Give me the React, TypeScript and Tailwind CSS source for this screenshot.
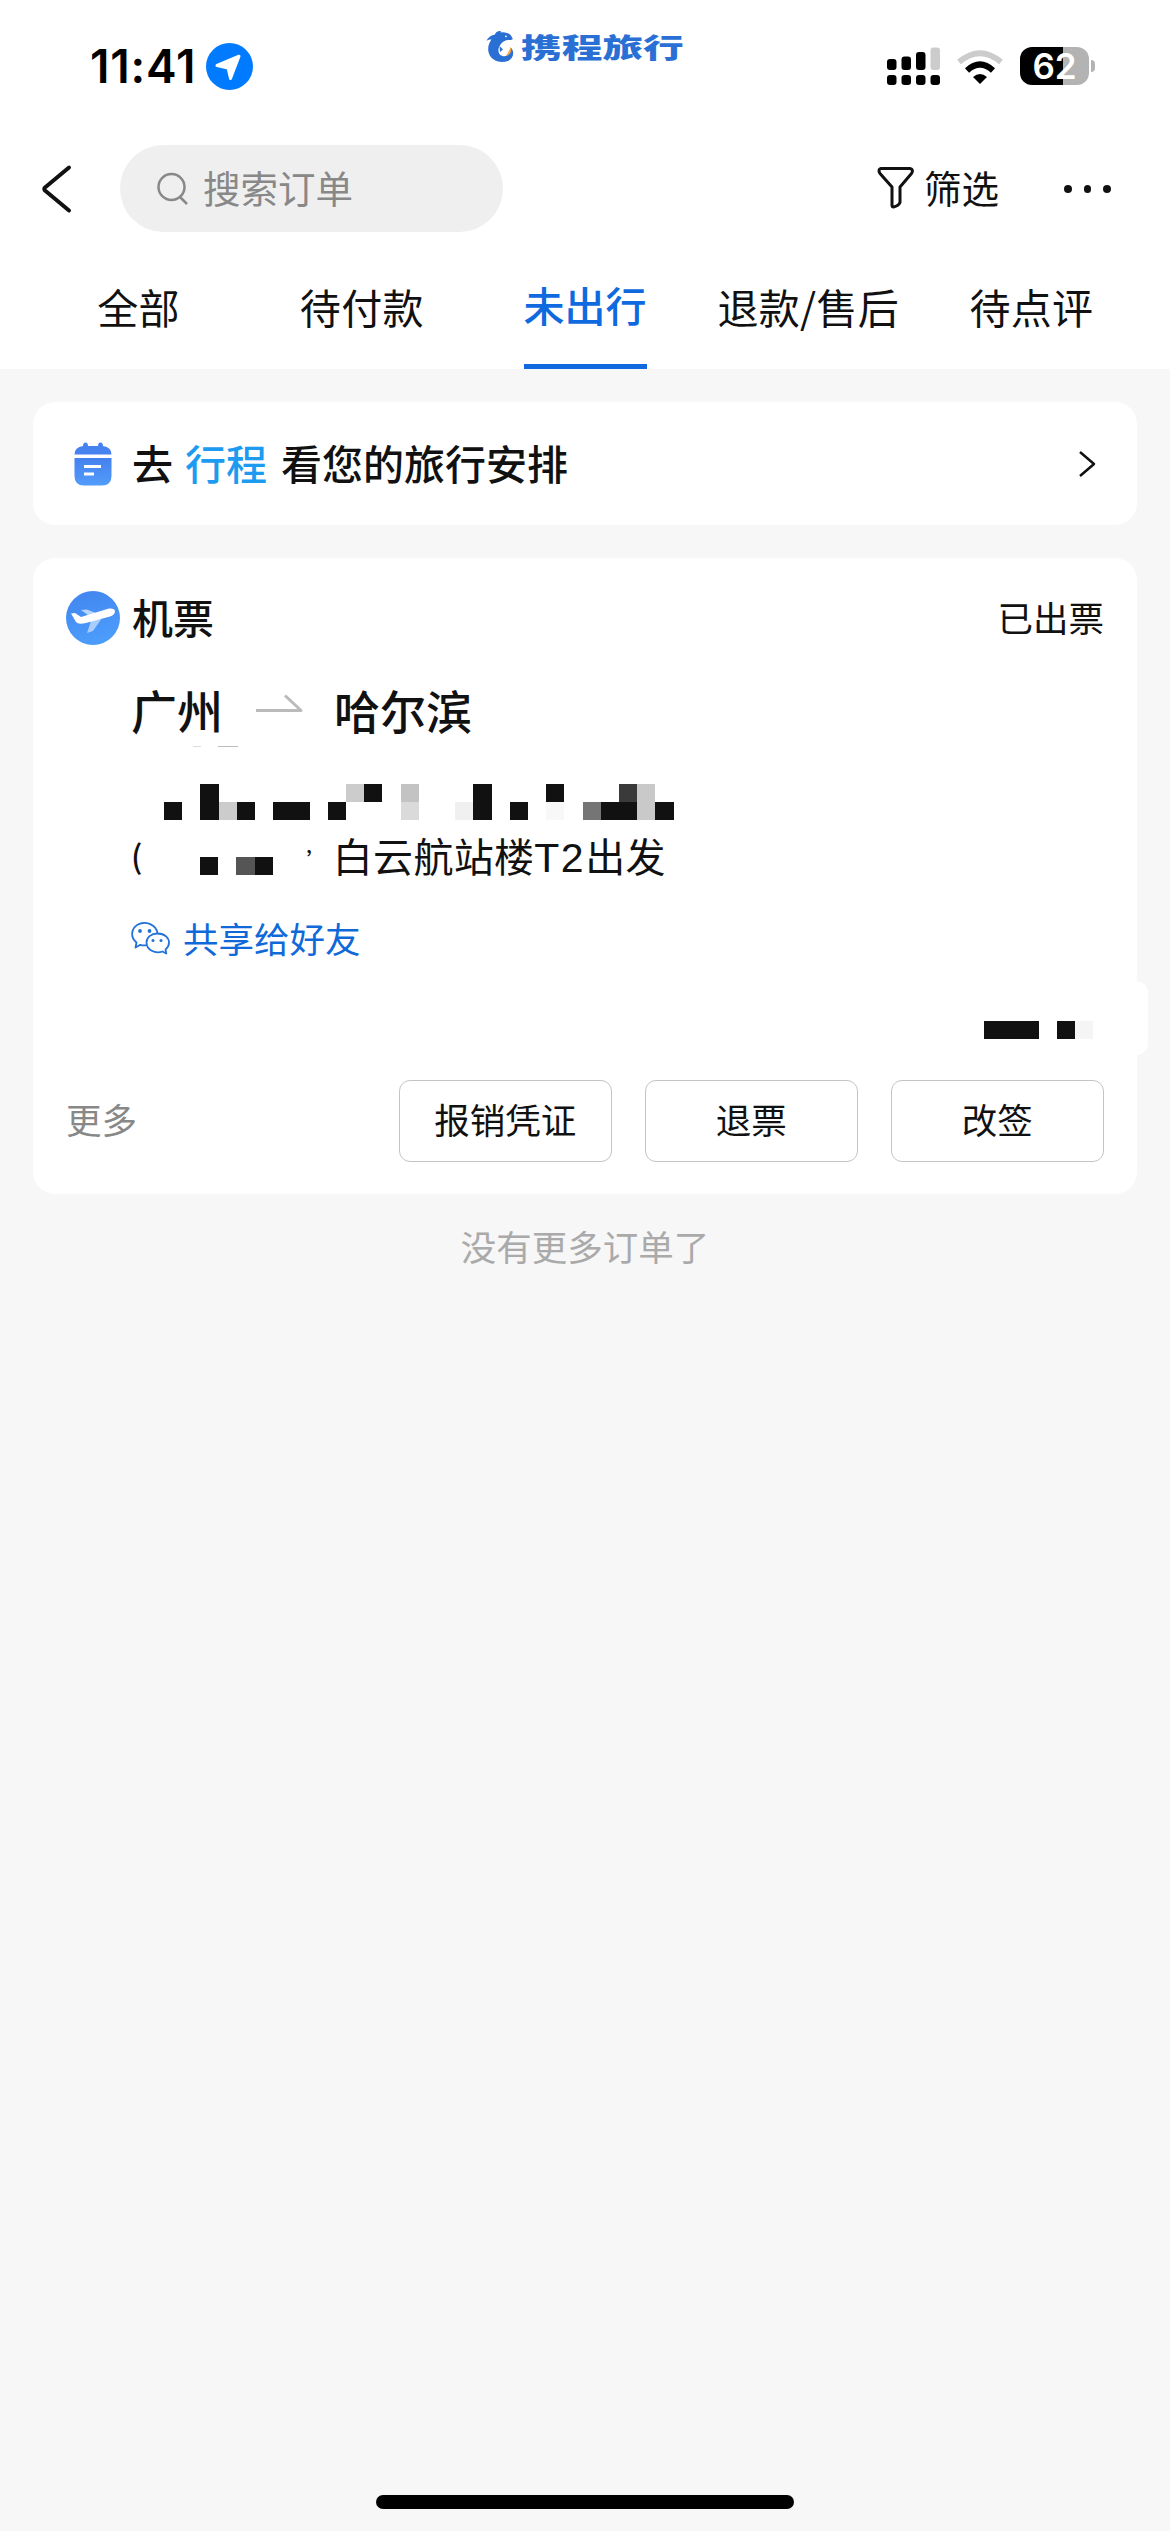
import type { ReactNode } from 'react';

type Tab = { label: string; active?: boolean };

const tabs: Tab[] = [
    { label: '全部' },
    { label: '待付款' },
    { label: '未出行', active: true },
    { label: '退款/售后' },
    { label: '待点评' },
];

const actions = ['报销凭证', '退票', '改签'];

// [column, row, fill] of every masked cell
type Cell = [number, number, string];

const CELL = 18.2;

const dateCells: Cell[] = [
    [2, 0, '#111'], [10, 0, '#ccc'], [11, 0, '#111'], [13, 0, '#c3c3c3'], [17, 0, '#111'],
    [21, 0, '#111'], [25, 0, '#3a3a3a'], [26, 0, '#c9c9c9'],
    [0, 1, '#111'], [2, 1, '#111'], [3, 1, '#ccc'], [4, 1, '#111'], [6, 1, '#111'], [7, 1, '#111'],
    [9, 1, '#111'], [13, 1, '#dadada'], [16, 1, '#f0f0f0'], [17, 1, '#111'], [19, 1, '#111'],
    [21, 1, '#f8f8f8'], [23, 1, '#757575'], [24, 1, '#111'], [25, 1, '#111'], [26, 1, '#c9c9c9'], [27, 1, '#111'],
];

const airportCells: Cell[] = [[0, 0, '#111'], [2, 0, '#555'], [3, 0, '#111']];

const priceCells: Cell[] = [
    [0, 0, '#111'], [1, 0, '#111'], [2, 0, '#111'], [4, 0, '#111'], [5, 0, '#f5f5f5'],
];

function Mosaic({ cells, cols, rows, className }: { cells: Cell[]; cols: number; rows: number; className?: string }) {
    return (
        <svg width={cols * CELL} height={rows * CELL} className={className} shapeRendering="crispEdges">
            {cells.map(([c, r, fill]) => (
                <rect key={`${c}-${r}`} x={c * CELL} y={r * CELL} width={CELL} height={CELL} fill={fill} />
            ))}
        </svg>
    );
}

function DolphinIcon() {
    return (
        <svg width="29" height="33" viewBox="0 0 29 33" className="shrink-0">
            <path
                d="M0.500 10.500C2.500 7 5 5 9 4.500C9.500 2 12 0.500 15 1L14.500 2.500C20 1.500 25 4 26 7.500C27.500 9 26.500 10.300 24 10C20 9.500 17 11 14.500 14.500C11 19 12 25 16.500 26C21 27 25.500 24 24.800 17.500C29 22 27.500 28.500 22 31C13 34 4.500 30 2.500 22C1.500 17 3 13 5.500 9.500C3.500 9.500 2 10 0.500 10.500Z"
                fill="#2a70d4"
            />
            <path d="M13.500 16L17 19.500L14 22Z" fill="#2a70d4" />
            <path d="M24.500 17C26.500 21 24.500 25 19.500 25.800C22 23.500 23 21 24.500 17Z" fill="#f0a63c" />
            <circle cx="20" cy="6.300" r="0.900" fill="#fff" />
        </svg>
    );
}

function StatusBar() {
    return (
        <div className="flex h-[130px] items-start justify-between pl-[90px] pr-[75px]">
            <div className="mt-[43px] flex w-[320px] items-center gap-[11px]">
                <span className="w-[105px] whitespace-nowrap font-['Inter'] text-[46px] font-semibold leading-[47px] tracking-[0.800px] text-black">11:41</span>
                <svg width="47" height="47" viewBox="0 0 47 47">
                    <circle cx="23.500" cy="23.500" r="23.500" fill="#007aff" />
                    <path d="M11 22.500L33 13.200L24.500 35.500L22 25Z" fill="#fff" stroke="#fff" strokeWidth="3" strokeLinejoin="round" />
                </svg>
            </div>

            <div className="mr-3 mt-[29px] flex h-[34px] w-[202px] items-center gap-[6px]">
                <DolphinIcon />
                <span className="origin-left scale-x-[1.48] whitespace-nowrap font-['Noto_Sans_CJK_SC',sans-serif] text-[27.500px] font-black leading-[34px] text-[#2a70d4]">携程旅行</span>
            </div>

            <div className="mt-[47px] flex w-[320px] items-center justify-end">
                <svg width="54" height="38" viewBox="0 0 54 38">
                    <rect x="0" y="12" width="9.500" height="11" rx="3" />
                    <rect x="14.500" y="9.500" width="9.500" height="13.500" rx="3" />
                    <rect x="29" y="5" width="9.500" height="18" rx="3" />
                    <rect x="43.500" y="0.500" width="9.500" height="22.500" rx="3" fill="#ccc" />
                    <rect x="0" y="28" width="9.500" height="10" rx="3" />
                    <rect x="14.500" y="28" width="9.500" height="10" rx="3" />
                    <rect x="29" y="28" width="9.500" height="10" rx="3" />
                    <rect x="43.500" y="28" width="9.500" height="10" rx="3" />
                </svg>
                <svg width="46" height="35" viewBox="0 0 46 35" className="ml-4">
                    <path d="M2 13Q23 -4.500 44 13" fill="none" stroke="#ccc" strokeWidth="6" />
                    <path d="M10 21.500Q23 9.500 36 21.500" fill="none" stroke="#000" strokeWidth="6" />
                    <path d="M16 28Q23 22 30 28L23 35Z" fill="#000" />
                </svg>
                <div className="ml-[17px] flex items-center gap-[2px]">
                    <div className="flex h-[38px] w-[69px] items-center justify-center rounded-[12px] bg-[linear-gradient(90deg,#000_62%,#b3b3b3_62%)] font-['Inter'] text-[35px] font-semibold leading-[38px] text-white">62</div>
                    <div className="h-3 w-1 rounded-r-full bg-[#b3b3b3]" />
                </div>
            </div>
        </div>
    );
}

function Header() {
    return (
        <div className="flex h-[118px] items-start pl-10">
            <svg width="33" height="50" viewBox="0 0 33 50" className="mt-[34px]" fill="none" stroke="#111" strokeWidth="4" strokeLinecap="round" strokeLinejoin="round">
                <path d="M29 3.500L5 23.500Q3.500 25 5 26.500L29 46.500" />
            </svg>
            <div className="ml-[47px] mt-[15px] flex h-[87px] w-[383px] items-center rounded-full bg-[#efefef] pl-[37px] text-[#888]">
                <svg width="32" height="34" viewBox="0 0 32 34" fill="none" stroke="#888" strokeWidth="2.500">
                    <circle cx="14.500" cy="15" r="13" />
                    <path d="M23 25L30 32" />
                </svg>
                <span className="mb-[3px] ml-[14px] text-[37.500px] leading-none">搜索订单</span>
            </div>
            <div className="ml-[374px] mt-[36px] flex items-center">
                <svg width="38" height="43" viewBox="0 0 38 43" fill="none" stroke="#111" strokeWidth="3" strokeLinejoin="round">
                    <path d="M4 2.500H33Q37 3.500 34.500 7.500L23 21V36.500Q21.500 40 16.500 41Q15 41 15 39V21L3 7.500Q0.500 3.500 4 2.500Z" />
                </svg>
                <span className="mb-[2px] ml-[9px] text-[37.500px] leading-none text-[#111]">筛选</span>
            </div>
            <div className="ml-[65px] mt-[55px] flex gap-3">
                <i className="size-[7.500px] rounded-full bg-[#111]" />
                <i className="size-[7.500px] rounded-full bg-[#111]" />
                <i className="size-[7.500px] rounded-full bg-[#111]" />
            </div>
        </div>
    );
}

function TabBar() {
    return (
        <div className="flex h-[121px] px-[27px]">
            {tabs.map((tab) => (
                <div key={tab.label} className="flex flex-1 justify-center">
                    <div
                        className={
                            tab.active
                                ? 'h-[121px] whitespace-nowrap border-b-[5.500px] border-[#0f6ae0] pt-[36px] text-[41px] font-medium leading-[41px] text-[#0f6ae0]'
                                : 'whitespace-nowrap pt-[38px] text-[41px] leading-[41px] tracking-[0.300px] text-[#111]'
                        }
                    >
                        {tab.label}
                    </div>
                </div>
            ))}
        </div>
    );
}

function TripBanner() {
    return (
        <Card className="mt-[33px] flex h-[123px] items-center pl-[41px] pr-10">
            <svg width="38" height="44" viewBox="0 0 38 44">
                <defs>
                    <linearGradient id="cal" x1="0" y1="0" x2="0" y2="1">
                        <stop offset="0" stopColor="#4581f0" />
                        <stop offset="1" stopColor="#529cfa" />
                    </linearGradient>
                </defs>
                <path d="M9 4Q9 0.500 11.500 0.500Q14 0.500 14 4H24Q24 0.500 26.500 0.500Q29 0.500 29 4Q37.500 5 37.500 12.500H0.500Q0.500 5 9 4Z" fill="#4682f0" />
                <path d="M0.500 16H37.500V34Q37.500 43.500 28 43.500H10Q0.500 43.500 0.500 34Z" fill="url(#cal)" />
                <path d="M10 24.500H27M10 32H20" stroke="#fff" strokeWidth="3.200" />
            </svg>
            <div className="mb-[3px] ml-[20px] flex text-[41px] font-medium leading-[41px] text-[#111]">
                <span>去</span>
                <span className="ml-[12px] text-[#1d9bf0]">行程</span>
                <span className="ml-[14px]">看您的旅行安排</span>
            </div>
            <svg width="20" height="28" viewBox="0 0 20 28" className="ml-auto" fill="none" stroke="#111" strokeWidth="2.500" strokeLinejoin="round">
                <path d="M3 2L17 14L3 26" />
            </svg>
        </Card>
    );
}

function Card({ className, children }: { className: string; children: ReactNode }) {
    return <section className={`mx-[33px] rounded-[22px] bg-white ${className}`}>{children}</section>;
}

function PlaneIcon() {
    return (
        <svg width="54" height="54" viewBox="0 0 54 54">
            <defs>
                <linearGradient id="plane" x1="0" y1="0" x2="0.300" y2="1">
                    <stop offset="0" stopColor="#4284ee" />
                    <stop offset="1" stopColor="#4b9cfb" />
                </linearGradient>
            </defs>
            <circle cx="27" cy="27" r="27" fill="url(#plane)" />
            <path d="M15 19L21 18.500L35 24L26 27Z" fill="#b4d5fd" />
            <path d="M25 30L36 27L27 40L21 42Z" fill="#a9cefd" />
            <path d="M5 22.500L9 22L15 26L43 17.500Q49 17 49 20.500Q48.500 24 44 25.500L20 32Q12 34 10 31Z" fill="#fff" />
        </svg>
    );
}

function WechatIcon() {
    return (
        <svg width="39" height="33" viewBox="0 0 39 33" fill="none" stroke="#2272dc" strokeWidth="1.800" strokeLinejoin="round">
            <path d="M15.500 23.200Q12 23.800 9.300 22.800L4.500 25.500L5.500 20.500C-1 15.500 0 6 7 2.500C15-1.500 25 2.500 26.500 11" />
            <path d="M26.500 11.500C34 11.500 38 16 38 20.500Q38 24.500 34.500 27.500L35.300 31.500L31.500 29.500C24 32 15.500 28 15.500 20.500C15.500 15.500 20 11.500 26.500 11.500Z" />
            <g fill="#2272dc" stroke="none">
                <circle cx="9" cy="9" r="1.900" />
                <circle cx="18.500" cy="9" r="1.900" />
                <circle cx="22" cy="18.500" r="1.500" />
                <circle cx="30" cy="18.500" r="1.500" />
            </g>
        </svg>
    );
}

function OrderCard() {
    return (
        <Card className="relative mt-[33px] flex h-[636px] flex-col px-[33px] pt-[33px]">
            <div className="flex h-[54px] items-center">
                <PlaneIcon />
                <span className="mb-[3px] ml-[12px] text-[41px] font-medium leading-[41px] text-[#111]">机票</span>
                <span className="mb-[3px] ml-auto text-[35.500px] leading-[36px] text-[#111]">已出票</span>
            </div>

            <div className="ml-[65px] mt-[39px] flex h-[50px] items-center text-[46px] font-medium leading-[50px] text-[#111]">
                <span>广州</span>
                <svg width="48" height="20" viewBox="0 0 48 20" className="ml-[33px] mr-[30px] mt-[-10px]" fill="none" stroke="#bbb" strokeWidth="3">
                    <path d="M0 16.500H45L29 1.500" strokeLinejoin="round" />
                </svg>
                <span>哈尔滨</span>
            </div>

            {/* sliver of the masked flight number */}
            <div className="ml-[127px] mt-[12px] flex h-[2px] items-start gap-[17px]">
                <i className="h-px w-2 bg-[#ddd]" />
                <i className="h-px w-[20px] bg-[#bbb]" />
            </div>

            <Mosaic cells={dateCells} cols={28} rows={2} className="ml-[98px] mt-[36px]" />

            <div className="ml-[65px] mt-[16px] flex h-[42px] items-center text-[40px] leading-[42px] text-[#111]">
                <span className="mb-[5px] w-[69px] text-[32px] font-medium">(</span>
                <Mosaic cells={airportCells} cols={4} rows={1} className="mt-[18px]" />
                <span className="ml-[34px] mt-[6px] w-[26px] text-[20px] font-bold leading-none">’</span>
                <span className="mb-[2px] whitespace-nowrap tracking-[0.300px]">
                    白云航站楼<span className="font-['Liberation_Sans'] text-[41px] tracking-[1.500px]">T2</span>出发
                </span>
            </div>

            <div className="ml-[65px] mt-[40px] flex h-[40px] items-center text-[35.500px] leading-[40px] text-[#1069d9]">
                <WechatIcon />
                <span className="ml-[13px]">共享给好友</span>
            </div>

            {/* masked price, its cover runs past the card edge */}
            <div className="absolute -right-[11px] top-[423px] h-[74px] w-[190px] rounded-[12px] bg-white">
                <Mosaic cells={priceCells} cols={6} rows={1} className="ml-[26px] mt-[40px]" />
            </div>

            <div className="mt-auto mb-[32px] flex items-center gap-[32.500px]">
                <span className="mb-[4px] mr-auto text-[35.500px] leading-none text-[#888]">更多</span>
                {actions.map((label) => (
                    <button key={label} className="h-[82px] w-[213.500px] rounded-[11px] border border-[#c4c4c4] pb-[4px] text-[35.500px] leading-none text-[#111]">
                        {label}
                    </button>
                ))}
            </div>
        </Card>
    );
}

export default function App() {
    return (
        <div className="flex h-[2531px] w-[1170px] flex-col overflow-hidden bg-[#f7f7f7] font-['Noto_Sans_CJK_SC',sans-serif]">
            <header className="bg-white">
                <StatusBar />
                <Header />
                <TabBar />
            </header>
            <TripBanner />
            <OrderCard />
            <p className="mt-[32px] text-center text-[35.500px] leading-[40px] text-[#aaa]">没有更多订单了</p>
            <div className="mx-auto mb-[22px] mt-auto h-[14px] w-[418px] rounded-full bg-black" />
        </div>
    );
}
